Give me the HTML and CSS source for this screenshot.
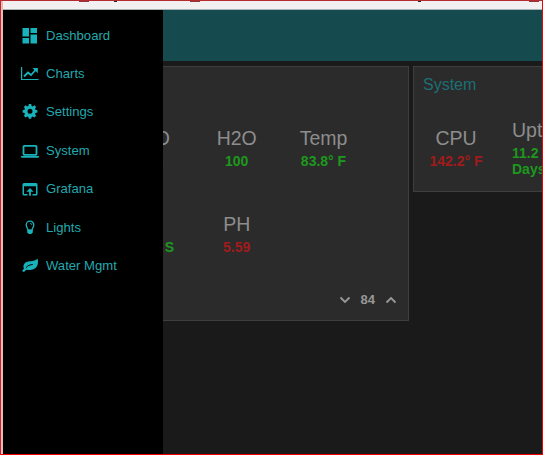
FILE: index.html
```html
<!DOCTYPE html>
<html lang="en">
<head>
<meta charset="utf-8">
<title>Dashboard</title>
<link rel="stylesheet" href="styles.css">
</head>
<body>
<div class="frame">
  <div class="chrome"><i class="m1"></i><i class="m2"></i><i class="m3"></i><i class="m4"></i><i class="m5"></i></div>
  <div class="app">
    <header class="topbar"></header>
    <main class="board">
      <section class="card tank">
        <div class="metrics">
          <div class="metric"><span class="label">H2O</span><b class="bad dim">6.53</b></div>
          <div class="metric"><span class="label">H2O</span><b class="ok">100</b></div>
          <div class="metric"><span class="label">Temp</span><b class="ok">83.8° F</b></div>
          <div class="metric"><span class="label">&nbsp;</span><b class="ok">842.0 S</b></div>
          <div class="metric"><span class="label">PH</span><b class="bad">5.59</b></div>
        </div>
        <div class="stepper">
          <svg width="12" height="8" viewBox="0 0 12 8"><path d="M1.500 1.500 6 6l4.500-4.500"/></svg>
          <b>84</b>
          <svg width="12" height="8" viewBox="0 0 12 8"><path d="M1.500 6.500 6 2l4.500 4.500"/></svg>
        </div>
      </section>
      <section class="card system">
        <h2>System</h2>
        <div class="readings">
          <div class="metric cpu"><span class="label">CPU</span><b class="bad">142.2° F</b></div>
          <div class="metric uptime"><span class="label">Uptime</span><b class="ok">11.2<br>Days</b></div>
        </div>
      </section>
    </main>
    <nav class="drawer">
      <a><svg viewBox="0 0 18 18"><path d="M1.500 1h6.500v8.500H1.500zM9.500 1h6.500v5H9.500zM9.500 7.500h6.500V16.500H9.500zM1.500 11h6.500v5.500H1.500z"/></svg>Dashboard</a>
      <a><svg viewBox="0 0 18 18"><path class="line thin" d="M.6 2v12.500h17"/><path class="line" d="m3 11.500 4-4 3 2.500 5-5.500"/><path d="M11.500 3h5.300v5.300z"/></svg>Charts</a>
      <a><svg class="gear" viewBox="0 0 18 18"><path fill-rule="evenodd" d="m7.800 2h2.400l.4 1.900 1.100.5 1.700-1.100 1.700 1.700L14 6.700l.5 1.100 1.900.4v2.400l-1.900.4-.5 1.100 1.100 1.700-1.700 1.700-1.700-1.100-1.100.5-.4 1.900H7.800l-.4-1.900-1.100-.5-1.700 1.100-1.700-1.700L4 12.100 3.500 11l-1.900-.4V8.200l1.900-.4L4 6.700 2.900 5l1.700-1.700 1.700 1.100 1.100-.5zM9 6.800a2.500 2.500 0 1 0 0 5 2.500 2.500 0 0 0 0-5z"/></svg><span class="lift">Settings</span></a>
      <a><svg viewBox="0 0 18 18"><rect class="line" x="2.500" y="3.800" width="13" height="9" rx=".8"/><path d="M0 14h18v.8q0 1-1.200 1H1.200Q0 15.800 0 14.800z"/></svg>System</a>
      <a><svg viewBox="0 0 18 18"><path d="M3 3h12Q16.500 3 16.500 4.500V14q0 1.500-1.500 1.500H11.500V14H15V6.300H3V14h3.500v1.500H3Q1.500 15.500 1.500 14V4.500Q1.500 3 3 3z"/><path d="m9 8 3.600 3.700H9.900v4H8.100v-4H5.400z"/></svg>Grafana</a>
      <a><svg viewBox="0 0 18 18"><path class="line bulb" d="M7 11.500C7 9 5.200 8.300 5.200 6a3.800 3.800 0 0 1 7.600 0c0 2.300-1.800 3-1.800 5.500z"/><path class="line hair" d="M9 4.300q1.800 0 1.800 1.700"/><path d="M6.300 10.500h5.400v3L10.200 15H7.800l-1.500-1.500z"/></svg>Lights</a>
      <a><svg viewBox="0 0 18 18"><path d="M16.500 1.500c1.300 4.500.2 8.500-3.600 10.500-2.800 1.500-5.400 1.100-7.600.8L3 15 1 14l2-2.400C1.300 8 3.800 5 7.500 4.400c3.700-.5 6.500 0 9-2.900z"/><path class="vein" d="M4.800 10.800c2-2.300 4-3 7-3.300"/></svg>Water Mgmt</a>
    </nav>
  </div>
</div>
</body>
</html>
```
FILE: styles.css
```css
* { box-sizing: border-box; }
body { margin: 0; background: #e60000; font-family: "Liberation Sans", Arial, sans-serif; }
.frame {
  width: 543px; height: 455px; padding-left: 2px;
  background: #e4bcbc;
  border: 1px solid #f00000; border-left-color: #c92525; border-top-color: #b52a2f;
  display: flex; flex-direction: column; overflow: hidden;
}
.chrome {
  flex: 0 0 9px; background: #f2f0f0; border-bottom: 1px solid #a9b4b5;
  display: grid; grid-template-columns: 76px 10px 25px 3px 73px 10px 218px 3px 108px 10px; align-items: start;
}
.chrome i { height: 1px; background: #92383c; grid-row: 1; }
.chrome .m1 { grid-column: 2; }
.chrome .m2 { grid-column: 4; background: #222; }
.chrome .m3 { grid-column: 6; }
.chrome .m4 { grid-column: 8; background: #222; }
.chrome .m5 { grid-column: 10; }
.app { flex: 1; position: relative; overflow: hidden; background: #1a1a1a; display: flex; flex-direction: column; }
.topbar { flex: 0 0 51px; background: #154b4e; }
.board { display: flex; align-items: flex-start; gap: 4px; padding: 5px 0 0 8px; }
.card { flex: none; background: #2b2b2b; border: 1px solid #3e3e3e; }
.tank { width: 398px; height: 255px; padding: 59px 0 0 94.500px; display: flex; flex-direction: column; }
.metrics { display: grid; grid-template-columns: repeat(3, 86.800px); grid-auto-rows: 86.400px; }
.metric { flex: none; display: flex; flex-direction: column; align-items: center; white-space: nowrap; }
.label { font-size: 19.500px; line-height: 24px; color: #8d8d8d; }
.metric b { font-size: 14px; line-height: 16px; margin-top: 3px; }
.ok { color: #1d981d; }
.bad { color: #a11b1b; }
.dim { opacity: .6; }
.stepper { align-self: flex-end; margin: -7px 11px 0 0; display: flex; align-items: center; gap: 10px; color: #989898; font-size: 13px; line-height: 16px; }
.stepper svg { fill: none; stroke: #989898; stroke-width: 1.8; }
.system { width: 160px; height: 126px; padding: 8px 0 0 9px; }
h2 { margin: 0; font-size: 16px; line-height: 19px; font-weight: 400; color: #1d7074; }
.readings { display: flex; }
.cpu { width: 66px; padding-top: 32px; }
.uptime { margin-left: 23px; padding-top: 24px; align-items: flex-start; }
.drawer {
  position: absolute; left: 0; top: 0; bottom: 0; width: 160px; background: #000;
  display: flex; flex-direction: column; padding: 7px 0 0 18px;
}
.drawer a { height: 38.330px; flex: none; display: flex; align-items: flex-start; gap: 7px; color: #23a9ad; font-size: 13.100px; line-height: 38px; }
.drawer svg { width: 18px; height: 18px; margin-top: 10px; fill: #18b3ba; }
.drawer .gear { margin-top: 8px; }
.drawer .lift { line-height: 36px; }
.drawer .line { fill: none; stroke: #18b3ba; stroke-width: 1.8; }
.drawer .thin { stroke-width: 1.2; }
.drawer .bulb { stroke-width: 1.300; }
.drawer .hair { stroke-width: .8; }
.drawer .vein { fill: none; stroke: #000; stroke-width: 1; }
```
